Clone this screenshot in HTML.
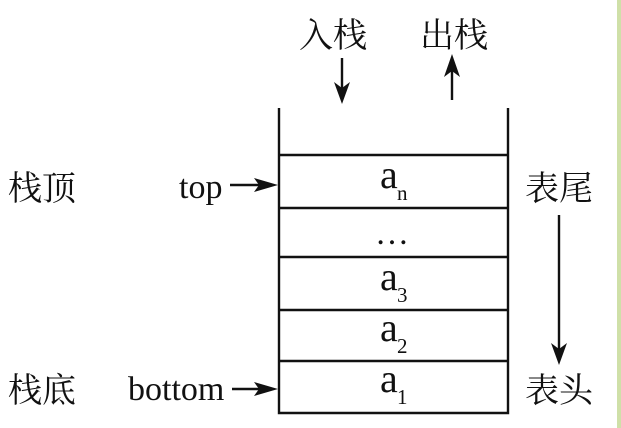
<!DOCTYPE html>
<html><head><meta charset="utf-8"><style>
html,body{margin:0;padding:0;background:#fff;}
svg{display:block}
text{fill:#111}
.c{font-family:"Liberation Serif","Noto Serif CJK SC","Noto Sans CJK SC",serif;font-size:34px}
.l{font-family:"Liberation Serif",serif;font-size:34px}
.a{font-family:"Liberation Serif",serif;font-size:40px}
.s{font-family:"Liberation Serif",serif;font-size:21px}
</style></head><body>
<svg width="621" height="428" viewBox="0 0 621 428" xmlns="http://www.w3.org/2000/svg">
<rect x="617" y="0" width="4" height="428" fill="#cfe0a8"/>
<g stroke="#111" stroke-width="2.4" fill="none">
<path d="M279 108V413H508V108"/>
<path d="M279 155H508M279 208H508M279 257H508M279 310H508M279 361H508"/>
<path d="M342 58V90M452 70V100M230 185H262M232 389H262M559 215V350"/>
</g>
<g fill="#111">
<path d="M334 82L342 104L350 82L342 88Z"/>
<path d="M444 77L452 54L460 77L452 71Z"/>
<path d="M254 178L278 185L254 192L259 185Z"/>
<path d="M254 382L278 389L254 396L259 389Z"/>
<path d="M551 343L559 365L567 343L559 349Z"/>
</g>
<text class="c" x="299" y="47">入栈</text>
<text class="c" x="420" y="47">出栈</text>
<text class="c" x="8" y="200">栈顶</text>
<text class="c" x="8" y="402">栈底</text>
<text class="c" x="525" y="200">表尾</text>
<text class="c" x="525" y="402">表头</text>
<text class="l" x="179" y="198">top</text>
<text class="l" x="128" y="400">bottom</text>
<text class="a" x="380" y="188">a</text><text class="s" x="397" y="200">n</text>
<text class="l" x="375" y="244">…</text>
<text class="a" x="380" y="290">a</text><text class="s" x="397" y="302">3</text>
<text class="a" x="380" y="341">a</text><text class="s" x="397" y="353">2</text>
<text class="a" x="380" y="392">a</text><text class="s" x="397" y="404">1</text>
</svg>
</body></html>
